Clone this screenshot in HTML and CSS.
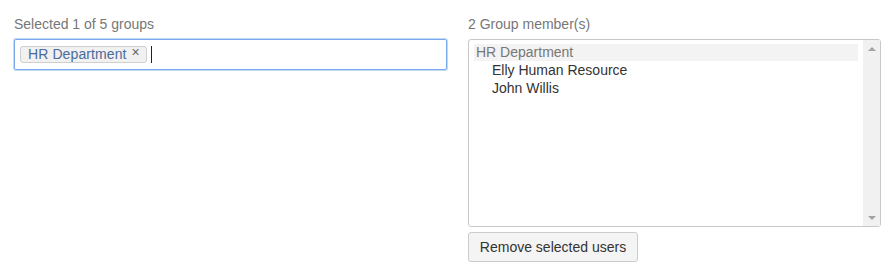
FILE: index.html
```html
<!DOCTYPE html>
<html>
<head>
<meta charset="utf-8">
<link rel="stylesheet" href="styles.css">
</head>
<body>
<div class="page">
  <div class="col col-left">
    <div class="label">Selected 1 of 5 groups</div>
    <div class="tag-input">
      <span class="tag">HR Department <span class="tag-x">×</span></span>
      <span class="caret"></span>
    </div>
  </div>
  <div class="col col-right">
    <div class="label">2 Group member(s)</div>
    <div class="listbox">
      <div class="list">
        <div class="group">HR Department</div>
        <div class="member">Elly Human Resource</div>
        <div class="member">John Willis</div>
      </div>
      <div class="scrollbar">
        <span class="arrow up"></span>
        <span class="arrow down"></span>
      </div>
    </div>
    <button class="btn">Remove selected users</button>
  </div>
</div>
</body>
</html>
```
FILE: styles.css
```css
html, body {
  margin: 0;
  padding: 0;
  background: #fff;
}
body {
  font-family: "Liberation Sans", Arial, sans-serif;
  font-size: 14px;
  line-height: 20px;
  color: #333;
}
.page {
  display: flex;
  padding: 14px 0 0 14px;
  gap: 21px;
}
.col-left {
  width: 433px;
}
.col-right {
  width: 413px;
  display: flex;
  flex-direction: column;
  align-items: flex-start;
}
.label {
  color: #777;
  height: 20px;
  margin-bottom: 5px;
}
.tag-input {
  box-sizing: border-box;
  height: 31px;
  border: 1px solid #79a9ec;
  box-shadow: 0 0 0 1px rgba(140, 185, 240, 0.55);
  border-radius: 2px;
  display: flex;
  align-items: center;
  padding: 0 0 0 5px;
}
.tag {
  box-sizing: border-box;
  height: 17px;
  line-height: 15px;
  border: 1px solid #cfcfcf;
  border-radius: 3px;
  background: #f1f1f1;
  color: #4b6b9b;
  padding: 0 6px 0 7px;
  display: inline-flex;
  align-items: center;
  gap: 5px;
  letter-spacing: 0.1px;
}
.tag-x {
  color: #666;
  font-size: 14px;
  position: relative;
  top: -2px;
}
.caret {
  display: inline-block;
  width: 1px;
  height: 17px;
  background: #222;
  margin-left: 4px;
}
.listbox {
  box-sizing: border-box;
  width: 413px;
  height: 188px;
  border: 1px solid #c8c8c8;
  border-radius: 3px;
  display: flex;
}
.list {
  flex: 1;
  padding: 4px 5px 0 5px;
}
.group {
  background: #f3f3f3;
  color: #777;
  height: 17px;
  line-height: 17px;
  padding-left: 2px;
}
.member {
  height: 18px;
  line-height: 18px;
  padding-left: 18px;
  color: #333;
}
.scrollbar {
  width: 17px;
  background: #f1f1f1;
  display: flex;
  flex-direction: column;
  justify-content: space-between;
  align-items: center;
  padding: 7px 0 6px;
  box-sizing: border-box;
}
.arrow {
  width: 0;
  height: 0;
  border-left: 4px solid transparent;
  border-right: 4px solid transparent;
}
.arrow.up {
  border-bottom: 4px solid #a3a3a3;
}
.arrow.down {
  border-top: 4px solid #a3a3a3;
}
.btn {
  margin-top: 5px;
  box-sizing: border-box;
  width: 170px;
  height: 30px;
  font-family: "Liberation Sans", Arial, sans-serif;
  font-size: 14px;
  color: #333;
  background: #f4f4f4;
  border: 1px solid #cccccc;
  border-radius: 3px;
  padding: 0;
}
```
